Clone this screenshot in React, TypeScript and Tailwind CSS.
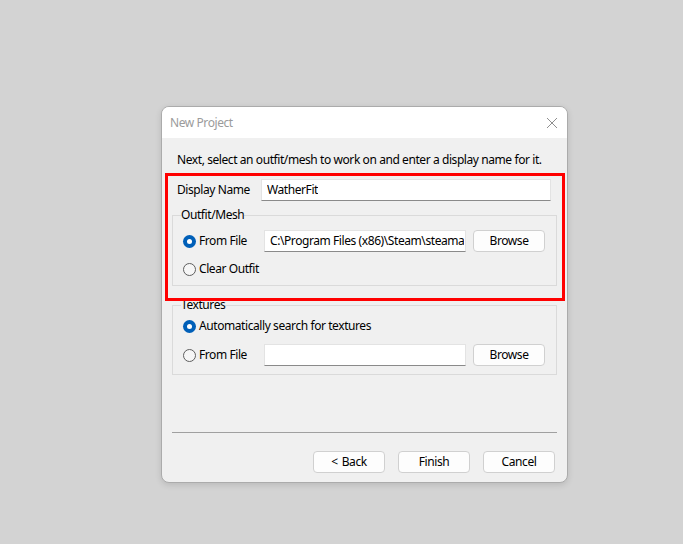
import React from "react";

const font = { fontFamily: '"Segoe UI", "Noto Sans", "Liberation Sans", sans-serif', letterSpacing: "-0.42px" };

function Radio({ checked }: { checked?: boolean }) {
  return checked ? (
    <span className="w-[13px] h-[13px] rounded-full bg-[#005fb8] flex items-center justify-center shrink-0">
      <span className="w-[5px] h-[5px] rounded-full bg-white" />
    </span>
  ) : (
    <span className="w-[13px] h-[13px] rounded-full border border-[#5e5e5e] bg-[#f6f6f6] shrink-0" />
  );
}

function Btn({ children, className = "" }: { children: React.ReactNode; className?: string }) {
  return (
    <div
      className={
        "w-[72px] h-[22px] rounded-[4px] border border-[#d0d0d0] bg-[#fdfdfd] flex items-center justify-center text-[12px] text-black " +
        className
      }
    >
      {children}
    </div>
  );
}

function Input({ value, w }: { value?: string; w: string }) {
  return (
    <div
      className={
        w +
        " h-[22px] bg-white border border-[#e3e3e3] border-b-[#8a8a8a] flex items-center pl-[5px] overflow-hidden whitespace-nowrap text-[12px] text-black"
      }
    >
      <span className="overflow-hidden whitespace-nowrap">{value}</span>
    </div>
  );
}

export default function App() {
  return (
    <div className="w-full h-[544px] bg-[#d3d3d3] pt-[106px] pl-[161px]" style={font}>
      <div className="relative w-[407px] h-[377px]">
        <div className="w-full h-full rounded-[8px] border border-[#ababab] bg-[#f0f0f0] overflow-hidden shadow-[0_2px_6px_rgba(0,0,0,0.12)] flex flex-col">
          <div className="h-[31px] bg-white flex items-center justify-between pl-[8px] pr-[9px] shrink-0">
            <span className="text-[12px] text-[#9b9b9b]">New Project</span>
            <svg width="12" height="12" viewBox="0 0 12 12">
              <path d="M1 1 L11 11 M11 1 L1 11" stroke="#8f8f8f" strokeWidth="1" />
            </svg>
          </div>
          <div className="pl-[10px] pr-[10px] pt-[14px] flex flex-col text-[12px] leading-[16px] text-black">
            <div className="ml-[5px] h-[16px] whitespace-nowrap">Next, select an outfit/mesh to work on and enter a display name for it.</div>
            <div className="ml-[5px] mt-[11px] h-[22px] flex items-center">
              <span className="w-[84px]">Display Name</span>
              <Input value="WatherFit" w="w-[290px]" />
            </div>

            <fieldset className="mt-[6px] border border-[#dadada] px-[8px] pb-[5px]">
              <legend className="px-0 leading-[16px]">Outfit/Mesh</legend>
              <div className="ml-[2px] mt-[7px] h-[22px] flex items-center">
                <div className="w-[81px] flex items-center gap-[3px]">
                  <Radio checked />
                  <span>From File</span>
                </div>
                <Input value="C:\Program Files (x86)\Steam\steama" w="w-[202px]" />
                <Btn className="ml-[7px]">Browse</Btn>
              </div>
              <div className="ml-[2px] mt-[6px] h-[22px] flex items-center gap-[3px]">
                <Radio />
                <span>Clear Outfit</span>
              </div>
            </fieldset>

            <fieldset className="mt-[11px] border border-[#dadada] px-[8px] pb-[8px]">
              <legend className="px-0 leading-[16px]">Textures</legend>
              <div className="ml-[2px] mt-[2px] h-[22px] flex items-center gap-[3px]">
                <Radio checked />
                <span>Automatically search for textures</span>
              </div>
              <div className="ml-[2px] mt-[7px] h-[22px] flex items-center">
                <div className="w-[81px] flex items-center gap-[3px]">
                  <Radio />
                  <span>From File</span>
                </div>
                <Input w="w-[202px]" />
                <Btn className="ml-[7px]">Browse</Btn>
              </div>
            </fieldset>

            <div className="mt-[57px] h-px bg-[#a0a0a0]" />
            <div className="mt-[18px] flex justify-end gap-[13px] mr-[2px]">
              <Btn>
                <span>&lt;</span>
                <span className="ml-[4px]">Back</span>
              </Btn>
              <Btn>Finish</Btn>
              <Btn>Cancel</Btn>
            </div>
          </div>
        </div>
        <div className="absolute left-[4px] top-[67px] w-[400px] h-[128px] border-[3px] border-[#ff0000] pointer-events-none" />
      </div>
    </div>
  );
}
